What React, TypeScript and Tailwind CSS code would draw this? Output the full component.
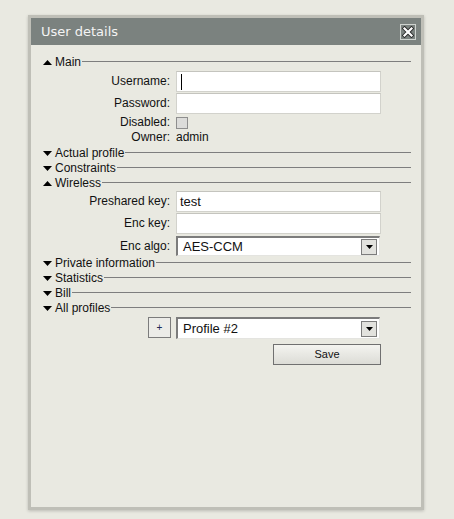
import React from "react";

function Tri({ up }: { up?: boolean }) {
  return (
    <svg width="9" height="5" viewBox="0 0 9 5" className="block">
      <polygon points={up ? "0,5 4.5,0 9,5" : "0,0 9,0 4.5,5"} fill="#000" />
    </svg>
  );
}

function Section({ title, open }: { title: string; open?: boolean }) {
  return (
    <div className="flex h-[15px] items-start">
      <div className="ml-[2px] mt-[5px] w-[9px]">
        <Tri up={open} />
      </div>
      <span className="ml-[3px] text-[12px] leading-[15px] text-[#111]">{title}</span>
      <div className="ml-[1px] mt-[6px] h-px flex-1 bg-[#7e7e7e]" />
    </div>
  );
}

function Label({ children }: { children: React.ReactNode }) {
  return (
    <div className="w-[135px] shrink-0 pr-[6px] text-right text-[12px] leading-[15px] text-[#111]">
      {children}
    </div>
  );
}

function TextBox({ value, caret }: { value?: string; caret?: boolean }) {
  return (
    <div className="flex h-[21px] w-[205px] items-center border border-[#d2d2cc] border-t-[#c4c4be] bg-white pl-[3px] text-[13px] text-[#111]">
      {caret && <span className="ml-px block h-[16px] w-px bg-black" />}
      {value}
    </div>
  );
}

function DropArrow() {
  return (
    <div className="flex h-[16px] w-[16px] items-center justify-center border border-[#7c7c7c] bg-[#e2e2de]">
      <svg width="7" height="4" viewBox="0 0 7 4" className="block">
        <polygon points="0,0 7,0 3.5,4" fill="#000" />
      </svg>
    </div>
  );
}

function SelectBox({ value, h }: { value: string; h: string }) {
  return (
    <div
      className={`flex ${h} w-[204px] items-center justify-between border-l-2 border-t-2 border-r border-b border-[#7c7c7c] border-r-[#e4e4e0] border-b-[#e4e4e0] bg-white pl-[5px] pr-[2px] text-[13px] text-[#111]`}
    >
      <span>{value}</span>
      <DropArrow />
    </div>
  );
}

export default function App() {
  return (
    <div className="h-[519px] w-[454px] bg-[#e9e9e1] pl-[28px] pt-[15px] font-['Liberation_Sans',Arial,sans-serif]">
      <div className="flex h-[495px] w-[396px] flex-col border-[3px] border-[#bfbfb7] bg-[#e9e9e1] shadow-[0_1px_3px_rgba(0,0,0,0.2)]">
        <div className="flex h-[27px] shrink-0 items-center justify-between bg-[#7b827f] pl-[10px] pr-[5px]">
          <span className="font-['DejaVu_Sans',Verdana,sans-serif] text-[13px] text-[#f4f4f4]">
            User details
          </span>
          <div className="flex h-[16px] w-[16px] items-center justify-center border border-[#cfd3cf]">
            <svg width="12" height="12" viewBox="0 0 12 12" className="block">
              <path d="M2.5 2.5 L9.5 9.5 M9.5 2.5 L2.5 9.5" stroke="#2a2a2a" strokeWidth="4" strokeLinecap="square" />
              <path d="M2.5 2.5 L9.5 9.5 M9.5 2.5 L2.5 9.5" stroke="#fff" strokeWidth="2.2" strokeLinecap="square" />
            </svg>
          </div>
        </div>

        <div className="flex flex-col px-[10px] pt-[10px]">
          <Section title="Main" open />
          <div className="mt-px flex items-center">
            <Label>Username:</Label>
            <TextBox caret />
          </div>
          <div className="mt-px flex items-center">
            <Label>Password:</Label>
            <TextBox />
          </div>
          <div className="mt-px flex h-[15px] items-start">
            <Label>Disabled:</Label>
            <div className="mt-[2px] h-[12px] w-[12px] border border-[#8e8e8e] bg-[#dcdcda]" />
          </div>
          <div className="flex h-[15px] items-start">
            <Label>Owner:</Label>
            <span className="text-[12px] leading-[15px] text-[#111]">admin</span>
          </div>
          <div className="mt-px">
            <Section title="Actual profile" />
          </div>
          <Section title="Constraints" />
          <Section title="Wireless" open />
          <div className="flex items-center">
            <Label>Preshared key:</Label>
            <TextBox value="test" />
          </div>
          <div className="mt-px flex items-center">
            <Label>Enc key:</Label>
            <TextBox />
          </div>
          <div className="mt-[2px] flex items-center">
            <Label>Enc algo:</Label>
            <SelectBox value="AES-CCM" h="h-[20px]" />
          </div>
          <Section title="Private information" />
          <Section title="Statistics" />
          <Section title="Bill" />
          <Section title="All profiles" />
          <div className="mt-px flex items-start">
            <div className="flex w-[135px] shrink-0 justify-end pr-[5px]">
              <div className="flex h-[21px] w-[23px] items-center justify-center border border-[#7c7c7c] bg-[#ecece8] text-[10px] text-[#1d2a55]">
                +
              </div>
            </div>
            <SelectBox value="Profile #2" h="h-[22px]" />
          </div>
          <div className="mt-[5px] flex justify-end pr-[30px]">
            <div className="flex h-[21px] w-[108px] items-center justify-center border border-[#707070] bg-gradient-to-b from-[#f4f4f0] to-[#dcdcd6] text-[11px] text-[#111]">
              Save
            </div>
          </div>
        </div>
      </div>
    </div>
  );
}
